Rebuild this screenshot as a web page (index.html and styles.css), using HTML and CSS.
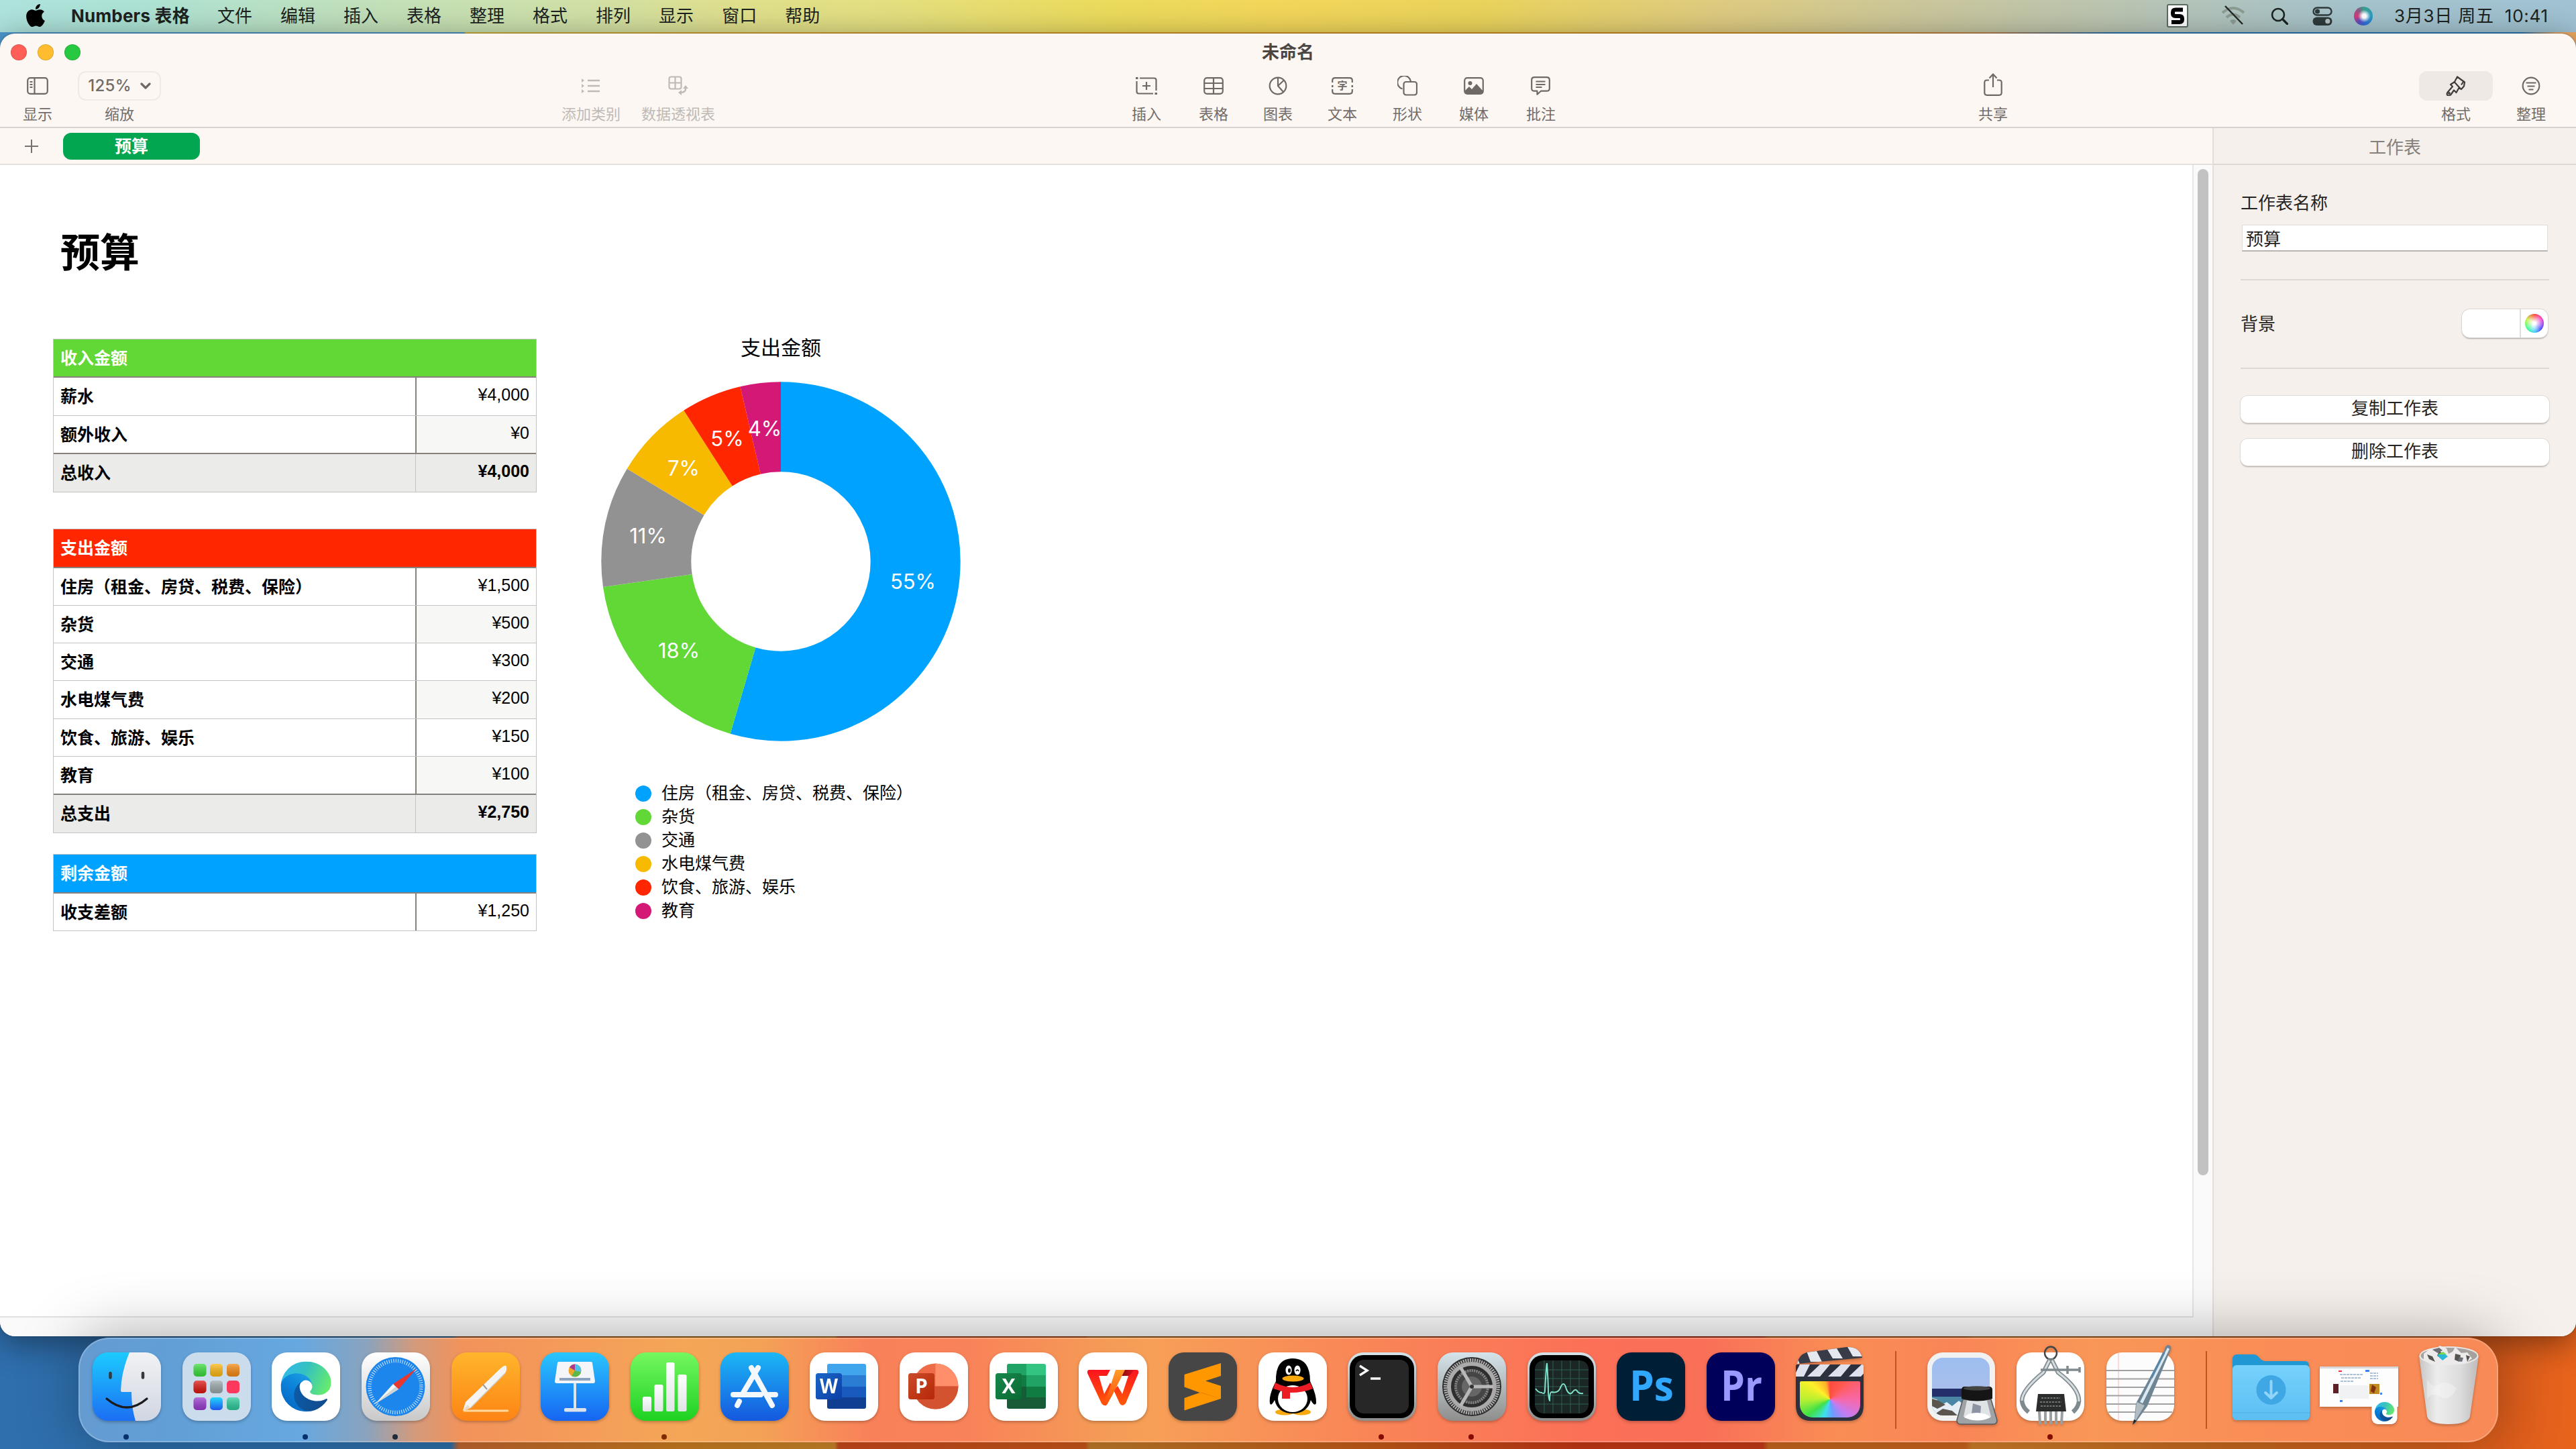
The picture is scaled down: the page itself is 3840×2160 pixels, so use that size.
FILE: index.html
```html
<!DOCTYPE html>
<html lang="zh-CN">
<head>
<meta charset="utf-8">
<title>未命名</title>
<link rel="stylesheet" href="styles.css">
</head>
<body>
<div class="desktop">
<header class="menubar">
  <svg class="apple" viewBox="0 0 24 24"><path d="M12.152 6.896c-.948 0-2.415-1.078-3.96-1.04-2.04.027-3.91 1.183-4.961 3.014-2.117 3.675-.546 9.103 1.519 12.09 1.013 1.454 2.208 3.09 3.792 3.039 1.52-.065 2.09-.987 3.935-.987 1.831 0 2.35.987 3.96.948 1.637-.026 2.676-1.48 3.676-2.948 1.156-1.688 1.636-3.325 1.662-3.415-.039-.013-3.182-1.221-3.22-4.857-.026-3.04 2.48-4.494 2.597-4.559-1.429-2.09-3.623-2.324-4.39-2.376-2-.156-3.675 1.09-4.61 1.09zM15.53 3.83c.843-1.012 1.4-2.427 1.245-3.83-1.207.052-2.662.805-3.532 1.818-.78.896-1.454 2.338-1.273 3.714 1.338.104 2.715-.688 3.559-1.701"/></svg>
  <nav class="menus">
    <b class="appname">Numbers 表格</b><span>文件</span><span>编辑</span><span>插入</span><span>表格</span><span>整理</span><span>格式</span><span>排列</span><span>显示</span><span>窗口</span><span>帮助</span>
  </nav>
  <div class="status">
    <svg class="st-s" width="32" height="36" viewBox="0 0 32 36"><rect x="1" y="1" width="30" height="33" rx="2" fill="#fff" stroke="#5d6a62" stroke-width="2"/><path d="M24 8.500H13q-4 0-4 4v1.500q0 4 4 4h6q4 0 4 4v1q0 4-4 4H7" fill="none" stroke="#000" stroke-width="6"/></svg>
    <svg class="st-wifi" width="36" height="30" viewBox="0 0 36 30"><g fill="none" stroke="#8d9c92" stroke-width="4"><path d="M2 11Q18-3 34 11"/><path d="M8 18q10-9 20 0"/></g><path d="M18 29l-5-6q5-4 10 0z" fill="#8d9c92"/><path d="M6 1l26 27" stroke="#1f2624" stroke-width="2.400"/></svg>
    <svg class="st-search" width="26" height="26" viewBox="0 0 26 26"><circle cx="11" cy="11" r="9" fill="none" stroke="#1b2220" stroke-width="2.600"/><path d="M17.500 17.500l7 7" stroke="#1b2220" stroke-width="3.200" stroke-linecap="round"/></svg>
    <svg class="st-cc" width="30" height="28" viewBox="0 0 30 28"><rect x="1.500" y="1.500" width="27" height="11" rx="5.500" fill="none" stroke="#2f3a3b" stroke-width="2.400"/><circle cx="7.500" cy="7" r="3.600" fill="#2f3a3b"/><rect x=".5" y="15.500" width="29" height="12.500" rx="6.200" fill="#2f3a3b"/><circle cx="22.800" cy="21.700" r="3.600" fill="#b0c3c3"/></svg>
    <span class="siri"></span>
    <span class="clock">3月3日 周五&nbsp; 10:41</span>
  </div>
</header>

<main class="window">
  <div class="titlebar">
    <div class="lights"><i class="red"></i><i class="yellow"></i><i class="green"></i></div>
    <h1>未命名</h1>
  </div>
  <div class="toolbar">
    <div class="tool"><div class="ico"><svg width="32" height="26" viewBox="0 0 32 26"><rect x="1.200" y="1.200" width="29.600" height="23.600" rx="4"/><path d="M11.500 1v24M4.500 7h4M4.500 11h4M4.500 15h4"/></svg></div>显示</div>
    <div class="tool"><div class="ico zoombtn">125%<svg width="16" height="10" viewBox="0 0 16 10"><path d="M2 2l6 6 6-6" stroke-width="3.200" stroke-linecap="round"/></svg></div>缩放</div>
    <span></span>
    <div class="tool off"><div class="ico"><svg width="28" height="22" viewBox="0 0 28 22"><path d="M9 3h18M9 11h18M9 19h18" stroke-width="2.400"/><g fill="#bfbab6" stroke="none"><path d="M0 0l4 3-4 3zM0 8l4 3-4 3zM0 16l4 3-4 3z"/></g></svg></div>添加类别</div>
    <div class="tool off"><div class="ico"><svg width="30" height="30" viewBox="0 0 30 30"><rect x="1.500" y="1.500" width="18" height="18" rx="3"/><path d="M1 10.500h18M10.500 1v18"/><path d="M26 18q1 7-8 7" stroke-width="2.400"/><path d="M22 19l4-5 4 5zM20 21l-5 4 5 4z" fill="#bfbab6" stroke="none"/></svg></div>数据透视表</div>
    <span></span>
    <div class="tool"><div class="ico"><svg width="32" height="26" viewBox="0 0 32 26"><path d="M6 1.500h21.500q3 0 3 3V20M26 24.500H4.500q-3 0-3-3V6M16 7v12M10 13h12"/><path d="M0 0h3.500v3H0zM28.500 23H32v3h-3.500z" fill="#6e6965" stroke="none"/></svg></div>插入</div>
    <div class="tool"><div class="ico"><svg width="30" height="26" viewBox="0 0 30 26"><rect x="1.200" y="1.200" width="27.600" height="23.600" rx="4"/><path d="M1 9h28M1 17h28M15 1v24"/></svg></div>表格</div>
    <div class="tool"><div class="ico"><svg width="28" height="28" viewBox="0 0 28 28"><circle cx="14" cy="14" r="12.300"/><path d="M14 2v12l8 9M14 14l8.500-8"/></svg></div>图表</div>
    <div class="tool"><div class="ico textico"><svg width="32" height="26" viewBox="0 0 32 26"><path d="M1.200 8V5q0-3.800 4-3.800h21.600q4 0 4 3.800v3M1.200 18v3q0 3.800 4 3.800h21.600q4 0 4-3.800v-3"/><path d="M0 12h2.500v3H0zM29.500 12H32v3h-2.500z" fill="#6e6965" stroke="none"/></svg><small>字</small></div>文本</div>
    <div class="tool"><div class="ico"><svg width="30" height="30" viewBox="0 0 30 30"><path d="M7.500 19.500A10 10 0 1 1 20 8"/><rect x="9.500" y="9" width="19.500" height="19.500" rx="3.500"/></svg></div>形状</div>
    <div class="tool"><div class="ico"><svg width="30" height="26" viewBox="0 0 30 26"><rect x="1.200" y="1.200" width="27.600" height="23.600" rx="4"/><path d="M2 20l6-6 4 4 7-8 9 10v3q0 2-3 2H5q-3 0-3-3z" fill="#6e6965" stroke="none"/><circle cx="9.500" cy="9" r="3" fill="#6e6965" stroke="none"/></svg></div>媒体</div>
    <div class="tool"><div class="ico"><svg width="30" height="28" viewBox="0 0 30 28"><path d="M5.500 1.200h18q4.300 0 4.300 4v12.500q0 4-4.300 4H15l-5.500 5V21.700h-4q-4.300 0-4.300-4V5.200q0-4 4.300-4zM7.500 7.500h14M7.500 12h14M7.500 16h9"/></svg></div>批注</div>
    <span></span>
    <div class="tool"><div class="ico share"><svg width="28" height="34" viewBox="0 0 28 34"><path d="M8 10.500H5q-3.700 0-3.700 3.500v15.300q0 3.500 3.700 3.500h18q3.700 0 3.700-3.500V14q0-3.500-3.700-3.500h-3M14 21V2M8.500 7.500L14 1.500l5.500 6"/></svg></div>共享</div>
    <span></span>
    <div class="tool on"><div class="ico"><svg width="30" height="30" viewBox="0 0 30 30"><path d="M17 1.500L28 9.500l-1 6-4 4.500-3.500-2-4 7-3.500-3.500L7.500 28q-3 2.500-5 1-2-2 .5-5l7-8-3-3 6-4zM12.500 9l10 11M26 9l-3 4.500"/><circle cx="5" cy="26" r=".8"/></svg></div>格式</div>
    <div class="tool"><div class="ico"><svg width="28" height="28" viewBox="0 0 28 28"><circle cx="14" cy="14" r="12.300"/><path d="M6.500 9.500h15M8.500 14.500h11M10.500 19.500h7"/></svg></div>整理</div>
  </div>

  <div class="body">
    <section class="left">
      <div class="tabs"><svg width="20" height="20" viewBox="0 0 20 20"><path d="M10 0v20M0 10h20" stroke="#77726f" stroke-width="2"/></svg><b>预算</b></div>
      <div class="sheetarea">
        <div class="sheet">
          <h2>预算</h2>
          <div class="content">
            <div class="tables">
              <div class="tbl income">
                <div class="th">收入金额</div>
                <div class="tr"><b>薪水</b><span>¥4,000</span></div>
                <div class="tr alt last"><b>额外收入</b><span>¥0</span></div>
                <div class="tf"><b>总收入</b><span>¥4,000</span></div>
              </div>
              <div class="tbl expense">
                <div class="th">支出金额</div>
                <div class="tr"><b>住房（租金、房贷、税费、保险）</b><span>¥1,500</span></div>
                <div class="tr alt"><b>杂货</b><span>¥500</span></div>
                <div class="tr"><b>交通</b><span>¥300</span></div>
                <div class="tr alt tall"><b>水电煤气费</b><span>¥200</span></div>
                <div class="tr"><b>饮食、旅游、娱乐</b><span>¥150</span></div>
                <div class="tr alt last"><b>教育</b><span>¥100</span></div>
                <div class="tf"><b>总支出</b><span>¥2,750</span></div>
              </div>
              <div class="tbl rest">
                <div class="th">剩余金额</div>
                <div class="tr end"><b>收支差额</b><span>¥1,250</span></div>
              </div>
            </div>
            <div class="chart">
              <h3>支出金额</h3>
              <svg class="donut" width="536" height="536" viewBox="-268 -268 536 536">
                <g fill="none" stroke-width="134" transform="rotate(-90)">
                  <circle r="200.700" pathLength="2750" stroke="#00a2ff" stroke-dasharray="1500 2750"/>
                  <circle r="200.700" pathLength="2750" stroke="#61d836" stroke-dasharray="500 2750" stroke-dashoffset="-1500"/>
                  <circle r="200.700" pathLength="2750" stroke="#929292" stroke-dasharray="300 2750" stroke-dashoffset="-2000"/>
                  <circle r="200.700" pathLength="2750" stroke="#f8ba00" stroke-dasharray="200 2750" stroke-dashoffset="-2300"/>
                  <circle r="200.700" pathLength="2750" stroke="#ff2600" stroke-dasharray="150 2750" stroke-dashoffset="-2500"/>
                  <circle r="200.700" pathLength="2750" stroke="#d41876" stroke-dasharray="100 2750" stroke-dashoffset="-2650"/>
                </g>
                <g class="pct"><text x="197" y="41">55%</text><text x="-152" y="144">18%</text><text x="-198" y="-27">11%</text><text x="-145" y="-128">7%</text><text x="-80" y="-172">5%</text><text x="-24" y="-187">4%</text></g>
              </svg>
              <ul>
                <li><i class="c1"></i>住房（租金、房贷、税费、保险）</li>
                <li><i class="c2"></i>杂货</li>
                <li><i class="c3"></i>交通</li>
                <li><i class="c4"></i>水电煤气费</li>
                <li><i class="c5"></i>饮食、旅游、娱乐</li>
                <li><i class="c6"></i>教育</li>
              </ul>
            </div>
          </div>
        </div>
        <div class="track"><i></i></div>
      </div>
    </section>
    <aside>
      <div class="ahead">工作表</div>
      <div class="apanel">
        <label>工作表名称</label>
        <div class="field">预算</div>
        <hr>
        <div class="bgrow"><span>背景</span><div class="well"><i></i><em></em></div></div>
        <hr>
        <div class="btn">复制工作表</div>
        <div class="btn">删除工作表</div>
      </div>
    </aside>
  </div>
</main>

<svg width="0" height="0" class="defs">
  <defs>
    <linearGradient id="gFind" x2="0" y2="1"><stop stop-color="#1ccbff"/><stop offset="1" stop-color="#1c6ef3"/></linearGradient>
    <linearGradient id="gFace" x2="0" y2="1"><stop stop-color="#f2f2f4"/><stop offset="1" stop-color="#d0d6e2"/></linearGradient>
    <linearGradient id="gShade" x2="0" y2="1"><stop stop-color="#fff" stop-opacity=".28"/><stop offset="1" stop-color="#000" stop-opacity=".16"/></linearGradient>
    <linearGradient id="gBlue" x2="0" y2="1"><stop stop-color="#1fd8ff"/><stop offset="1" stop-color="#1f55ea"/></linearGradient>
    <linearGradient id="gSilver" x2="0" y2="1"><stop stop-color="#fff"/><stop offset="1" stop-color="#c9c9c9"/></linearGradient>
    <linearGradient id="gSys" x2="0" y2="1"><stop stop-color="#d5e4ea"/><stop offset="1" stop-color="#8e8e8c"/></linearGradient>
    <linearGradient id="gPages" x2="0" y2="1"><stop stop-color="#ffb52c"/><stop offset="1" stop-color="#fd8415"/></linearGradient>
    <linearGradient id="gKey" x2="0" y2="1"><stop stop-color="#29c6fd"/><stop offset="1" stop-color="#1665f2"/></linearGradient>
    <linearGradient id="gNum" x2="0" y2="1"><stop stop-color="#75f760"/><stop offset="1" stop-color="#1dd122"/></linearGradient>
    <linearGradient id="gApp" x2="0" y2="1"><stop stop-color="#1cb7f6"/><stop offset="1" stop-color="#1558de"/></linearGradient>
    <linearGradient id="gBar" x2="0" y2="1"><stop stop-color="#fff"/><stop offset="1" stop-color="#dfe4e4"/></linearGradient>
    <linearGradient id="gWps" x2="0" y2="1"><stop stop-color="#fb141f"/><stop offset="1" stop-color="#ff5a06"/></linearGradient>
    <linearGradient id="gW2" x2="0" y2="1"><stop stop-color="#ff9b28"/><stop offset="1" stop-color="#ff4a08"/></linearGradient>
    <linearGradient id="gW3"><stop stop-color="#6d0908"/><stop offset="1" stop-color="#f0141f"/></linearGradient>
    <linearGradient id="gTile" x2="1" y2="1"><stop stop-color="#1b66c9"/><stop offset="1" stop-color="#0c3fa5"/></linearGradient>
    <linearGradient id="gTileP" x2="1" y2="1"><stop stop-color="#ca4c28"/><stop offset="1" stop-color="#b62708"/></linearGradient>
    <linearGradient id="gTileX" x2="1" y2="1"><stop stop-color="#17884c"/><stop offset="1" stop-color="#0a6a34"/></linearGradient>
    <linearGradient id="e1" x1=".1" y1=".5" x2="1" y2=".8"><stop stop-color="#0c59a4"/><stop offset="1" stop-color="#114a8b"/></linearGradient>
    <linearGradient id="e2" x1=".8" y1=".1" x2=".3" y2="1"><stop stop-color="#1b9de2"/><stop offset=".5" stop-color="#0a7fd8"/><stop offset="1" stop-color="#0667c0"/></linearGradient>
    <linearGradient id="e3" x1="0" y1=".3" x2="1" y2=".6"><stop stop-color="#33b9ee"/><stop offset=".45" stop-color="#35c1c0"/><stop offset="1" stop-color="#66eb6e"/></linearGradient>
    <linearGradient id="gSky" x2="0" y2="1"><stop stop-color="#9bbdf1"/><stop offset="1" stop-color="#a9bfec"/></linearGradient>
    <linearGradient id="gFold" x2="0" y2="1"><stop stop-color="#76d1fc"/><stop offset="1" stop-color="#5cbef2"/></linearGradient>
    <linearGradient id="gTrash"><stop stop-color="#c7c5c4"/><stop offset=".3" stop-color="#ededed"/><stop offset=".7" stop-color="#dcdcdc"/><stop offset="1" stop-color="#bdbab9"/></linearGradient>
    <clipPath id="sq"><rect width="102" height="102" rx="23"/></clipPath>
    <symbol id="edge" viewBox="0 0 256 256"><path fill="url(#e1)" d="M231 190.500c-3.400 1.800-6.900 3.400-10.500 4.700a101.900 101.900 0 0 1-35.900 6.500c-47.300 0-88.500-32.500-88.500-74.300 0-11.500 6.500-22 16.500-27.500-42.800 1.800-53.800 46.400-53.800 72.500 0 74 68.100 81.400 82.800 81.400 7.900 0 19.800-2.300 27-4.600l1.300-.4a128.300 128.300 0 0 0 66.600-52.800 4 4 0 0 0-5.400-5.600z"/><path fill="url(#e2)" d="M105.700 241.400A79.200 79.200 0 0 1 83 220.100a80.700 80.700 0 0 1 29.500-120.400c3.200-1.500 8.500-4.100 15.600-4a32.400 32.400 0 0 1 25.700 13 31.900 31.900 0 0 1 6.300 18.700c0-.2 24.500-79.600-80-79.600-43.900 0-80 41.600-80 78.200a130.100 130.100 0 0 0 12.100 56 128 128 0 0 0 156.400 67 75.500 75.500 0 0 1-62.900-7.600z"/><path fill="url(#e3)" d="M152.300 148.900c-.9 1-3.400 2.500-3.400 5.600 0 2.600 1.700 5.200 4.800 7.300 14.400 10.100 41.700 8.700 41.800 8.700 10.700 0 21.200-2.900 30.400-8.300a61.600 61.600 0 0 0 30.500-53c.2-22.600-8-37.600-11.400-44.100C223.800 23.300 177.700 0 127.900 0A128 128 0 0 0 0 126.200c.5-36.500 36.800-66 80-66 3.500 0 23.500.3 42 10.100 16.300 8.600 24.900 19 30.800 29.200 6.200 10.700 7.300 24.200 7.300 29.500 0 5.400-2.700 13.400-7.800 19.900z"/></symbol>
  </defs>
</svg>

<footer class="dock">
  <div class="app run blue"><svg viewBox="0 0 102 102"><g clip-path="url(#sq)"><rect width="102" height="102" fill="url(#gFind)"/><path d="M55 0Q43 28 42 57q0 2 2 2h14q0 24 6 43h40V0z" fill="url(#gFace)"/></g><path d="M26.500 31v6.500M75 31v6.500" stroke="#33383f" stroke-width="4.500" stroke-linecap="round"/><path d="M21 69q30 26 60 0" fill="none" stroke="#1b1b1f" stroke-width="3.200" stroke-linecap="round"/></svg></div>
  <div class="app"><svg viewBox="0 0 102 102"><rect width="102" height="102" rx="23" fill="#cbdded"/><rect x="16.500" y="17" width="19" height="19" rx="5" fill="#3bdd3c"/><rect x="41" y="17" width="19" height="19" rx="5" fill="#fdb913"/><rect x="66" y="17" width="19" height="19" rx="5" fill="#f78a12"/><rect x="16.500" y="42" width="19" height="19" rx="5" fill="#dd1712"/><rect x="41" y="42" width="19" height="19" rx="5" fill="#9ba8ab"/><rect x="66" y="42" width="19" height="19" rx="5" fill="#fc395c"/><rect x="16.500" y="67" width="19" height="19" rx="5" fill="#9a3bd0"/><rect x="41" y="67" width="19" height="19" rx="5" fill="url(#gBlue)"/><rect x="66" y="67" width="19" height="19" rx="5" fill="#2ccb9c"/><g fill="url(#gShade)"><rect x="16.500" y="17" width="19" height="19" rx="5"/><rect x="41" y="17" width="19" height="19" rx="5"/><rect x="66" y="17" width="19" height="19" rx="5"/><rect x="16.500" y="42" width="19" height="19" rx="5"/><rect x="41" y="42" width="19" height="19" rx="5"/><rect x="16.500" y="67" width="19" height="19" rx="5"/><rect x="66" y="67" width="19" height="19" rx="5"/></g></svg></div>
  <div class="app run blue"><svg viewBox="0 0 102 102"><rect width="102" height="102" rx="23" fill="#fff"/><use href="#edge" x="13.500" y="13.500" width="75" height="75"/></svg></div>
  <div class="app run gray"><svg viewBox="0 0 102 102"><rect width="102" height="102" rx="23" fill="url(#gSilver)"/><circle cx="50.500" cy="51" r="44" fill="#1c86ec"/><circle cx="50.500" cy="51" r="38.500" fill="none" stroke="#dcecfb" stroke-width="5.500" stroke-dasharray="1 2.360"/><path d="M82 24L47 47l8 8z" fill="#e8372f"/><path d="M20 77l27-30 8 8z" fill="#f4f4f4"/><path d="M20 77l31-26 4 4z" fill="#cfd3d6"/></svg></div>
  <div class="app"><svg viewBox="0 0 102 102"><rect width="102" height="102" rx="23" fill="url(#gPages)"/><path d="M18 87h67" stroke="#ffd9a0" stroke-width="3"/><path d="M17 87l4-13L73 24q10-9 9 1 0 4-4 8L28 83z" fill="#f6f4f2"/><path d="M17 87l11-4-4-5z" fill="#e9d9c6"/><path d="M47 48l6 7" stroke="#9d9a97" stroke-width="2"/><path d="M28 83L80 31" stroke="#cfcac6" stroke-width="1.500"/></svg></div>
  <div class="app"><svg viewBox="0 0 102 102"><rect width="102" height="102" rx="23" fill="url(#gKey)"/><path d="M49 44h4v41h-4z" fill="#dfe3ea"/><path d="M27 14h48q2 0 2 2l4 27q0 3-3 3H24q-3 0-3-3l4-27q0-2 2-2z" fill="#f3f5f9"/><path d="M28 38h46v4H28z" fill="#8ba2bf"/><circle cx="51" cy="27" r="9.500" fill="#f0a62c"/><path d="M51 27v-9.500a9.500 9.500 0 0 1 9 12z" fill="#4cc1ee"/><path d="M51 27l9 2.500a9.500 9.500 0 0 1-14 5.500z" fill="#5db84c"/><path d="M51 27v-9.500a9.500 9.500 0 0 0-8 5z" fill="#a93c8b"/><rect x="35" y="83" width="33" height="5.500" rx="2" fill="#dde2ea"/></svg></div>
  <div class="app run brown"><svg viewBox="0 0 102 102"><rect width="102" height="102" rx="23" fill="url(#gNum)"/><g fill="url(#gBar)"><rect x="18" y="66" width="13" height="22" rx="2.500"/><rect x="35.500" y="48" width="13" height="40" rx="2.500"/><rect x="53" y="15" width="12.500" height="73" rx="2.500"/><rect x="70.500" y="33" width="13" height="55" rx="2.500"/></g></svg></div>
  <div class="app"><svg viewBox="0 0 102 102"><rect width="102" height="102" rx="23" fill="url(#gApp)"/><g stroke="#f4f7fb" stroke-width="8" stroke-linecap="round"><path d="M56 23L34 60M28 73l-3 6M19 63h41M73 63h9M46 23l31 56"/></g></svg></div>
  <div class="app"><svg viewBox="0 0 102 102"><rect width="102" height="102" rx="23" fill="#fff"/><path d="M29 17h52q3 0 3 3v14H26V20q0-3 3-3z" fill="#41a5ee"/><path d="M26 34h58v17H26z" fill="#2b7cd3"/><path d="M26 51h58v16H26z" fill="#185abd"/><path d="M26 67h58v14q0 3-3 3H29q-3 0-3-3z" fill="#103f91"/><rect x="9" y="31" width="39" height="39" rx="3.500" fill="url(#gTile)"/><text class="tile" x="28.500" y="61" textLength="27" lengthAdjust="spacingAndGlyphs">W</text></svg></div>
  <div class="app"><svg viewBox="0 0 102 102"><rect width="102" height="102" rx="23" fill="#fff"/><circle cx="53.500" cy="50.500" r="34" fill="#ed6c47"/><path d="M53.500 16.500a34 34 0 0 1 34 34h-34z" fill="#ff8f6b"/><path d="M19.500 50.500h68a34 34 0 0 1-68 0z" fill="#d35230"/><rect x="13" y="31" width="39" height="39" rx="3.500" fill="url(#gTileP)"/><text class="tile" x="32.500" y="61">P</text></svg></div>
  <div class="app"><svg viewBox="0 0 102 102"><rect width="102" height="102" rx="23" fill="#fff"/><path d="M29 17h26v17H26V20q0-3 3-3z" fill="#21a366"/><path d="M55 17h26q3 0 3 3v14H55z" fill="#33c481"/><path d="M26 34h29v17H26z" fill="#107c41"/><path d="M55 34h29v17H55z" fill="#21a366"/><path d="M26 51h29v16H26z" fill="#185c37"/><path d="M55 51h29v16H55z" fill="#107c41"/><path d="M26 67h58v14q0 3-3 3H29q-3 0-3-3z" fill="#185c37"/><rect x="9" y="31" width="39" height="39" rx="3.500" fill="url(#gTileX)"/><text class="tile" x="28.500" y="61">X</text></svg></div>
  <div class="app"><svg viewBox="0 0 102 102"><rect width="102" height="102" rx="23" fill="#fff"/><path d="M16 26h31l-5 9H30l8 27 9-17 5 12-9 19q-5 6-9 0L13 31q-1-5 3-5z" fill="url(#gWps)"/><path d="M72 35l6-9h8q4 0 3 5L70 76q-5 6-9 0l-9-20 6-6 7 12 9-27z" fill="url(#gWps)"/><path d="M62 26h22l-9 9H60z" fill="url(#gW3)"/><path d="M55 26h14L50 64l-8 14q-3 3-6-1l8-17z" fill="url(#gW2)"/></svg></div>
  <div class="app"><svg viewBox="0 0 102 102"><rect width="102" height="102" rx="23" fill="#464646"/><path d="M78 16v19l-23 7.500L78 50v19L23.500 86.500V68l23-8-23-8.500V33z" fill="#ff9800"/><path d="M46.500 60L78 69 52 60.500l-5-1z" fill="#e07a00"/></svg></div>
  <div class="app"><svg viewBox="0 0 102 102"><rect width="102" height="102" rx="23" fill="#fff"/><ellipse cx="39" cy="89" rx="14" ry="4.500" fill="#f7a90e"/><ellipse cx="64" cy="89" rx="14" ry="4.500" fill="#f7a90e"/><path d="M51 9q26 0 26 34 10 21 9 33-3 5-8-5-5 20-27 20T24 71q-5 10-7 5-2-12 9-33Q25 9 51 9z" fill="#000"/><ellipse cx="51" cy="69" rx="22" ry="20" fill="#fff"/><path d="M25 45q26 14 52 0l4 9q-14 6-34 6v9H35V58l-13-4z" fill="#ec1c24"/><ellipse cx="45" cy="26.500" rx="4.600" ry="7" fill="#fff"/><ellipse cx="58" cy="26.500" rx="4.600" ry="7" fill="#fff"/><ellipse cx="46" cy="27" rx="2" ry="3.200"/><path d="M56 28q2-4 4 0" fill="none" stroke="#000" stroke-width="1.500"/><ellipse cx="51.500" cy="39" rx="16" ry="4.500" fill="#f7a90e"/></svg></div>
  <div class="app run maroon"><svg viewBox="0 0 102 102"><rect width="102" height="102" rx="23" fill="url(#gSys)"/><rect x="3" y="4" width="96" height="94" rx="20" fill="#000"/><rect x="11" y="11" width="80" height="80" rx="13" fill="#272727"/><path d="M18 20l11 7-11 7M34 39h15" fill="none" stroke="#fff" stroke-width="3.400"/></svg></div>
  <div class="app run maroon"><svg viewBox="0 0 102 102"><rect width="102" height="102" rx="23" fill="url(#gSys)"/><circle cx="51" cy="51" r="44" fill="#2e2e2e"/><circle cx="51" cy="51" r="39.500" fill="none" stroke="#b0b0b0" stroke-width="5" stroke-dasharray="2 1.450"/><circle cx="51" cy="51" r="34" fill="none" stroke="#aaa" stroke-width="6"/><circle cx="51" cy="51" r="26" fill="#454545"/><circle cx="51" cy="51" r="24" fill="none" stroke="#858585" stroke-width="4" stroke-dasharray="2 1.400"/><circle cx="51" cy="51" r="15" fill="#666"/><path d="M51 51h32M51 51L34 22M51 51L34 80" stroke="#b8b8b8" stroke-width="5"/><circle cx="51" cy="51" r="3" fill="#333"/></svg></div>
  <div class="app"><svg viewBox="0 0 102 102"><rect width="102" height="102" rx="23" fill="url(#gSys)"/><rect x="3" y="4" width="96" height="94" rx="20" fill="#000"/><rect x="11" y="12" width="80" height="79" rx="13" fill="#1b2625"/><path d="M25 12v79M38 12v79M51 12v79M64 12v79M77 12v79M11 26h80M11 39h80M11 51h80M11 64h80M11 77h80" stroke="#2f5f55"/><path d="M12 54q4 6 9 6 5 3 5-3 2-38 3-41 2 30 2 44 1 12 2 12 0-13 3-13 8 2 12-4 6-16 10 0 5 11 10 3 4-5 7 1 3 3 8 2" fill="none" stroke="#7fe0cb" stroke-width="2"/></svg></div>
  <div class="app"><svg viewBox="0 0 102 102"><rect width="102" height="102" rx="22" fill="#001e36"/><text class="adobe" x="19" y="72" fill="#31a8ff" textLength="66" lengthAdjust="spacingAndGlyphs">Ps</text></svg></div>
  <div class="app"><svg viewBox="0 0 102 102"><rect width="102" height="102" rx="22" fill="#00005b"/><text class="adobe" x="21" y="72" fill="#9999ff" textLength="62" lengthAdjust="spacingAndGlyphs">Pr</text></svg></div>
  <div class="app fcp"><svg viewBox="0 0 102 102"><clipPath id="fs"><path d="M2 17Q4 4 16 0L76-8q19-1 23 16z"/></clipPath><clipPath id="fb"><rect y="18" width="101" height="20" rx="2"/></clipPath><path d="M0 20q0-2 2-2h97q2 0 2 2v59q0 23-23 23H23Q0 102 0 79z" fill="#2c3140"/><g clip-path="url(#fs)"><path d="M0-10h102v30H0z" fill="#383c48"/><path d="M16-2h15l8 16H22zM46-6h15l9 15H55zM76-10h15l10 16H85zM-4 8l6 0 5 12H0z" fill="#e6e8ef"/></g><g clip-path="url(#fb)" fill="#dfe2ec"><path d="M6 18h15l-9 18H-3zM36 18h15L36 36H17zM67 18h15L67 36H48zM98 18h15L97 36H79z"/></g></svg><i></i></div>
  <i class="sep"></i>
  <div class="app"><svg viewBox="0 0 102 102"><rect width="101" height="102" rx="23" fill="#f1f1f1"/><clipPath id="ph"><rect x="7" y="8" width="86" height="86" rx="16"/></clipPath><g clip-path="url(#ph)"><path d="M0 0h102v55H0z" fill="url(#gSky)"/><path d="M0 54h102v14H0z" fill="#242e6b"/><path d="M0 66h102v36H0z" fill="#4b86a5"/><path d="M7 68l7 2 8 8 7-4 8 6 10-8 10 8v16H7z" fill="#e4eef4"/><path d="M7 69l10 3 10 6-12 6-8-4zM14 90l9-6 14 3 8 7H14z" fill="#5a564f"/></g><path d="M53 70h42l9 31q0 6-6 6H50q-6 0-6-6z" fill="#9fa3a5" stroke="#55595b" stroke-width="1.500"/><path d="M59 72h30l6 24q-20 10-41 0z" fill="#dfe3e6"/><path d="M68 76l12 4-1 14-13-3z" fill="#8d93a2"/><path d="M55 97q20 9 39 0-6-7-20-7t-19 7z" fill="#fff"/><path d="M51 56q0-5 5-5h36q5 0 5 5v13q-23 7-46 0z" fill="#151515"/><ellipse cx="74" cy="53.500" rx="20" ry="3.200" fill="#444"/></svg></div>
  <div class="app run maroon"><svg viewBox="0 0 102 102"><rect width="101" height="102" rx="23" fill="#fff"/><g fill="none"><ellipse cx="51" cy="1" rx="9" ry="9.500" stroke="#3f4447" stroke-width="2.500"/><path d="M50 10L40 30Q8 56 8 72q1 10 10 17M52 10l10 20q32 24 31 43-1 9-9 16" stroke="#7f8a8f" stroke-width="6.500" stroke-linejoin="round"/><path d="M49 12L40 30Q8 56 8 72M53 12l9 18q32 24 31 43" stroke="#d4dce0" stroke-width="3"/><path d="M36 26h58M76 20v12M94 22v8" stroke="#7f8a8f" stroke-width="3.500"/></g><path d="M32 62h39l3 26H29z" fill="#2b2d2d"/><path d="M34 88l1 19M43 88v19M51 88v19M59 88v19M68 88l-1 19" stroke="#9a9fa2" stroke-width="4"/><path d="M37 68h28M35 74h32M36 80h31" stroke="#8c8c8c" stroke-width="1.600" stroke-dasharray="3 1.500"/></svg></div>
  <div class="app"><svg viewBox="0 0 102 102"><rect width="101" height="102" rx="23" fill="#fcfcfc"/><path d="M18 1v100" stroke="#f5b5b5"/><path d="M0 27h101M0 39.500h101M0 52h101M0 64.500h101M0 77h101M3 89h95" stroke="#a0a0a0" stroke-width="1.800"/><path d="M92-11q6 1 4 6L61 80 41 108l3-32L86-2q2-9 6-9z" fill="#6f8594"/><path d="M91-7L50 74l4 2L94-5z" fill="#dbe9f3"/><path d="M45 74l12 5-15 25z" fill="#b3bcc3"/><path d="M39 108l2-8 4 2z" fill="#222"/><path d="M67 38L86 0" stroke="#5b87a5" stroke-width="3.500"/></svg></div>
  <i class="sep two"></i>
  <div class="app folder"><svg viewBox="0 0 116 102"><path d="M1 10q0-7 7-7h24q5 0 8 4l4 4q3 2 6 2h59q6 0 6 7v20H1z" fill="#2198d4"/><rect x="1" y="19" width="115" height="82" rx="6" fill="url(#gFold)"/><path d="M1 90h115" stroke="#4db3e8"/><circle cx="58.500" cy="56" r="22" fill="#3ea7e4"/><path d="M58.500 43v25M50 60l8.500 8 8.500-8" fill="none" stroke="#8fd5f9" stroke-width="4" stroke-linecap="round" stroke-linejoin="round"/></svg></div>
  <div class="app mini"><svg viewBox="0 0 117 102"><path d="M0 21h117v60H0z" fill="#fdfdfd"/><path d="M0 21h117v3H0z" fill="#d9d9d9"/><path d="M28 27h5v2h-5z" fill="#e3344a"/><path d="M68 26h6v3h-6zM90 60h3v3h-3zM30 71h4v3h-4z" fill="#3b82f0"/><path d="M30 33h34M32 38h30M31 43h20M75 31h12M75 35h12M75 39h12" stroke="#8faccc" stroke-width="1.500" stroke-dasharray="4 1"/><path d="M29 49h44v20H29z" fill="#f1f2f4"/><path d="M20 47h8v14h-8z" fill="#5c2026"/><path d="M74 47h15v15H74z" fill="#c28b22"/><path d="M78 48l6 4-3 9-5-3z" fill="#843314"/><rect x="77.500" y="69" width="38" height="38" rx="9" fill="#fff"/><use href="#edge" x="82" y="74" width="29" height="29"/></svg></div>
  <div class="app trash"><svg viewBox="0 0 89 102"><path d="M0 5l12 90q2 12 32 12t32-12L89 5z" fill="url(#gTrash)"/><ellipse cx="44.500" cy="5" rx="43" ry="13" fill="#a5a19e" stroke="#e8e6e5" stroke-width="2"/><path d="M7 2l10-8 6 2 8-6 10 4 3 8 6-3 4-7 9 9 9-1 7 9-10 7-24 3-26-1-12-6z" fill="#eceaea"/><path d="M12 3l8 3 4 8-9-4zM30-2l6 4-2 8-7-5zM54 2l8 2-2 10-7-3zM70 4l6 2-4 8z" fill="#57544f"/><path d="M20-4l10-3 5 4-7 4zM60 7l6 1-2 6-6-1z" fill="#6c6e76"/><path d="M27 4l10-3 6 5-8 6z" fill="#2bb7d6"/><path d="M28 3l8-4 5 4z" fill="#79d94b"/><path d="M12 40q8 14 18 8 12-8 26 6-10 20-24 12-14-8-20 4z" fill="#fff" opacity=".3"/></svg></div>
</footer>
</div>
</body>
</html>
```
FILE: styles.css
```css
* { box-sizing: border-box; }
html, body { margin: 0; width: 3840px; height: 2160px; overflow: hidden; }
body { font: 26px/36px Inter, "Noto Sans CJK SC", sans-serif; color: #262422; }
h1, h2, h3, ul, hr { margin: 0; padding: 0; }
i { font-style: normal; display: block; }
svg { flex: none; display: block; }
.defs { position: absolute; }

.desktop {
  width: 3840px; height: 2160px; display: flex; flex-direction: column;
  background:
    linear-gradient(90deg, #4e9ad0 0 692px, #d6b83c 694px, #dfa02c 1300px, #d8921f 2700px, #c88a50 2960px, #2f7ab8 3150px, #2f7ab8 3760px, #eda762 3810px) 0 48px / 100% 40px no-repeat,
    linear-gradient(90deg, #2f6fae 0, #2f74b0 672px, #c96a30 684px, #d08022 1000px, #d08a2a 1244px, #cf4c1c 1250px, #cf5a1c 1618px, #c8802a 1624px, #cd5f1a 2050px, #cc3a16 2350px, #cc3d18 2628px, #cf6a1f 2636px, #d2691f 2930px, #d7842a 2940px, #cf6c20 3330px, #df5e1c 3730px, #e8641c 3840px);
}

/* Menu bar */
.menubar {
  height: 48px; flex: none; display: flex; align-items: center; color: #1b2220;
  padding-right: 38px;
  background: linear-gradient(90deg, #aee2dc 0, #ace2d5 200px, #bfe0bd 500px, #cfe0a8 850px, #dfdf8c 1100px, #e3df82 1300px, #ebdb5c 1650px, #f2d65a 1900px, #ead35b 2200px, #decb80 2560px, #c8c69e 2900px, #b7c4b5 3200px, #a4c2cb 3500px, #a0c2d3 3840px);
}
.apple { width: 34px; height: 34px; margin: -2px 0 0 36px; }
.menus { display: flex; gap: 42px; margin-left: 36px; margin-top: -1px; }
.appname { font-weight: 700; width: 176px; white-space: nowrap; letter-spacing: .2px; }
.status { margin-left: auto; display: flex; align-items: center; }
.st-s { margin-right: 1px; }
.st-wifi { margin-left: 48px; margin-top: -3px; }
.st-search { margin-left: 38px; }
.st-cc { margin-left: 36px; }
.siri {
  width: 28px; height: 28px; margin: 0 32px; border-radius: 50%;
  background: radial-gradient(circle at 55% 50%, #fff 0 14%, transparent 45%), conic-gradient(#3aa08a, #2c9ec4 25%, #2d6fd8 45%, #5a4fc0 60%, #d83a78 75%, #8a5c88 90%, #3aa08a);
}
.clock { width: 233px; white-space: nowrap; margin-top: -1px; letter-spacing: .75px; }

/* Window */
.window { margin-top: 2px; height: 1942px; flex: none; border-radius: 22px; overflow: hidden; background: #fdf7f3; box-shadow: 0 0 2px rgba(0, 0, 0, .5), 0 10px 50px rgba(0, 0, 0, .45); display: flex; flex-direction: column; }
.titlebar { height: 56px; flex: none; display: grid; grid-template-columns: 1fr auto 1fr; align-items: center; }
.titlebar h1 { font-size: 26px; font-weight: 700; color: #4a4643; margin-top: -1px; }
.lights { display: flex; gap: 16px; padding-left: 16px; }
.lights i { width: 24px; height: 24px; border-radius: 50%; border: 1px solid rgba(0, 0, 0, .12); }
.red { background: #ff5f57; } .yellow { background: #febc2e; } .green { background: #28c840; }

.toolbar { height: 85px; flex: none; display: grid; border-bottom: 2px solid #d6d1ce; grid-template-columns: 112px 132px 572px 130px 130px 583px 100px 100px 92px 100px 94px 104px 96px 576px 100px 585px 110px 114px; }
.tool { display: flex; flex-direction: column; align-items: center; font-size: 22px; line-height: 30px; color: #716c69; }
.ico { height: 44px; margin-bottom: 5px; display: flex; align-items: center; justify-content: center; }
.ico svg { fill: none; stroke: #6e6965; stroke-width: 2.2; stroke-linejoin: round; }
.off { color: #bfbab6; } .off .ico svg { stroke: #bfbab6; }
.share svg { margin-top: -4px; }
.zoombtn { width: 124px; border: 2px solid #f0eae6; border-radius: 12px; font-size: 24px; font-weight: 500; gap: 13px; letter-spacing: .3px; }
.textico { display: grid; }
.textico > * { grid-area: 1 / 1; place-self: center; }
.textico small { font-size: 15px; line-height: 18px; font-weight: 700; }
.on .ico { width: 110px; border-radius: 12px; background: #efe9e5; }
.on .ico svg { stroke: #3f3b39; }

.body { flex: 1; display: flex; min-height: 0; }
.left { width: 3298px; display: flex; flex-direction: column; }
.tabs { height: 55px; flex: none; display: flex; align-items: center; background: #fcf7f2; border-bottom: 2px solid #e3e0dc; padding-left: 37px; gap: 37px; }
.tabs b { width: 204px; height: 40px; border-radius: 12px; background: #03a650; color: #fff; text-align: center; font-size: 25px; line-height: 40px; margin-top: 1px; }
.sheetarea { flex: 1; display: flex; background: #fafafa; padding-bottom: 28px; }
.sheet { width: 3270px; background: #fff; border-right: 2px solid #e6e6e6; border-bottom: 2px solid #e2e2e2; padding-top: 89px; color: #000; }
.sheet h2 { font-size: 59px; line-height: 84px; padding-left: 90px; }
.track { width: 28px; padding: 6px 4px 0 6px; }
.track i { width: 16px; height: 1500px; border-radius: 8px; background: #c2c2c2; }

.content { display: flex; padding: 86px 0 0 79px; font: 25px/36px "Liberation Sans", "Noto Sans CJK SC", sans-serif; }
.tables { width: 721px; }
.tbl { border: 1px solid #c3c3c3; }
.expense { margin-top: 54px; } .rest { margin-top: 31px; }
.th { height: 58px; border-bottom: 2px solid #87817c; color: #fff; font-weight: 700; padding-left: 10px; line-height: 57px; }
.income .th { height: 57px; background: #61d836; }
.expense .th { background: #ff2600; }
.rest .th { background: #00a2ff; }
.tr, .tf { display: flex; height: 56px; line-height: 57px; border-bottom: 1px solid #c3c3c3; }
.tr b, .tf b { width: 539px; padding-left: 10px; }
.tr span, .tf span { flex: 1; text-align: right; padding-right: 10px; border-left: 2px solid #87817c; line-height: 51px; }
.income .tr, .tr.tall, .tr.last { height: 57px; }
.tr.last { border-bottom: 2px solid #87817c; }
.tr.end { height: 55px; border: 0; }
.alt span { background: #f7f7f5; }
.tf { background: #ebebe9; border: 0; }
.tf span { border-left: 1px solid #c3c3c3; font-weight: 700; }

.chart { margin-left: 96px; width: 536px; }
.chart h3 { font-size: 30px; line-height: 36px; font-weight: 400; text-align: center; margin-top: -4px; }
.donut { margin-top: 32px; }
.pct text { fill: #fff; font: 31px Inter, sans-serif; text-anchor: middle; }
.chart ul { list-style: none; padding: 60px 0 0 51px; font-family: Inter, "Noto Sans CJK SC", sans-serif; }
.chart li { height: 35.1px; line-height: 35.1px; display: flex; align-items: center; gap: 15px; white-space: nowrap; }
.chart li i { width: 24px; height: 24px; border-radius: 50%; }
.c1 { background: #00a2ff; } .c2 { background: #61d836; } .c3 { background: #929292; }
.c4 { background: #f8ba00; } .c5 { background: #ff2600; } .c6 { background: #d41876; }

/* Inspector */
aside { width: 542px; background: #f6f0ec; border-left: 2px solid #e3ddda; }
.ahead { height: 55px; line-height: 57px; text-align: center; color: #85807c; border-bottom: 2px solid #dfd9d5; }
.apanel { padding: 39px 40px 0; }
.apanel label { display: block; }
.field { height: 40px; margin: 14px 2px 41px; padding-left: 5px; line-height: 41px; background: #fff; border: 1px solid #e2dcd8; border-bottom: 2px solid #b9b4b1; }
.apanel hr { height: 2px; border: 0; background: #ded8d4; }
.bgrow { height: 130px; display: flex; align-items: center; justify-content: space-between; padding-right: 2px; }
.well { width: 128px; height: 42px; margin-top: -2px; border-radius: 12px; background: #fff; display: flex; box-shadow: 0 0 0 1px #dcd6d2, 0 2px 2px #aaa5a2; align-items: center; }
.well i { width: 88px; height: 42px; border-right: 2px solid #dedede; }
.well em { width: 28px; height: 28px; margin-left: 6px; border-radius: 50%; background: radial-gradient(#fff 10%, rgba(255, 255, 255, 0) 70%), conic-gradient(#ff3b30, #f43bd0 60deg, #4040ff 130deg, #3bd0ff 180deg, #3bff80 240deg, #c8f040 300deg, #ff3b30); }
.btn { height: 40px; line-height: 38px; border-radius: 11px; background: #fff; text-align: center; box-shadow: 0 0 0 1px #e0dad6, 0 2px 2px #aaa5a2; margin-top: 24px; }
hr + .btn { margin-top: 40px; }

/* Dock */
.dock {
  margin: 2px 116px 0 117px; height: 156px; flex: none; border-radius: 46px; padding: 22px 0 0 21px; display: flex; position: relative;
  background: linear-gradient(90deg, #649bd1 0, #629fd7 150px, #67a8e0 330px, #8aa3bd 430px, #d39a7c 500px, #f1935b 570px, #f4985a 680px, #f5a657 900px, #f4a356 1010px, #f98159 1180px, #f98359 1330px, #f49b56 1530px, #f79f57 1600px, #f98757 1900px, #fb7057 2250px, #f96f58 2420px, #f98d55 2620px, #f98557 2800px, #f99757 3000px, #f98c57 3300px, #f88a57 3607px);
  box-shadow: inset 0 0 0 2px rgba(255, 255, 255, .22), 0 0 90px rgba(0, 0, 0, .34);
}
.app { width: 102px; height: 102px; margin-right: 31.66px; flex: none; position: relative; }
.app svg { width: 100%; height: 102px; overflow: visible; filter: drop-shadow(0 2px 2px rgba(0, 0, 0, .25)); }
.run::after { content: ""; position: absolute; left: 46px; top: 122px; width: 8px; height: 8px; border-radius: 50%; }
.run.blue::after { background: #06306e; } .run.gray::after { background: #1d2b3a; }
.run.brown::after { background: #802c00; } .run.maroon::after { background: #840c00; }
.tile { fill: #fff; font: 700 30px "Open Sans", sans-serif; text-anchor: middle; }
.adobe { font: 700 62px "Open Sans", sans-serif; }
.fcp i { position: absolute; left: 6px; top: 43px; width: 90px; height: 54px; border-radius: 2px 2px 19px 19px; background: conic-gradient(#ff4b3c, #ff5a50 40deg, #f868a8 90deg, #c77bf0 130deg, #6a9cff 170deg, #3fe0f0 200deg, #3ee04a 235deg, #b8f030 270deg, #fff02a 310deg, #ffb02a 345deg, #ff4b3c); }
.sep { width: 2px; height: 116px; margin: -2px 45.66px 0 14px; background: #c2551f; flex: none; }
.sep.two { margin-right: 37px; }
.folder { width: 116px; margin-right: 15px; }
.mini { width: 117px; }
.trash { width: 89px; margin-right: 0; }
```
